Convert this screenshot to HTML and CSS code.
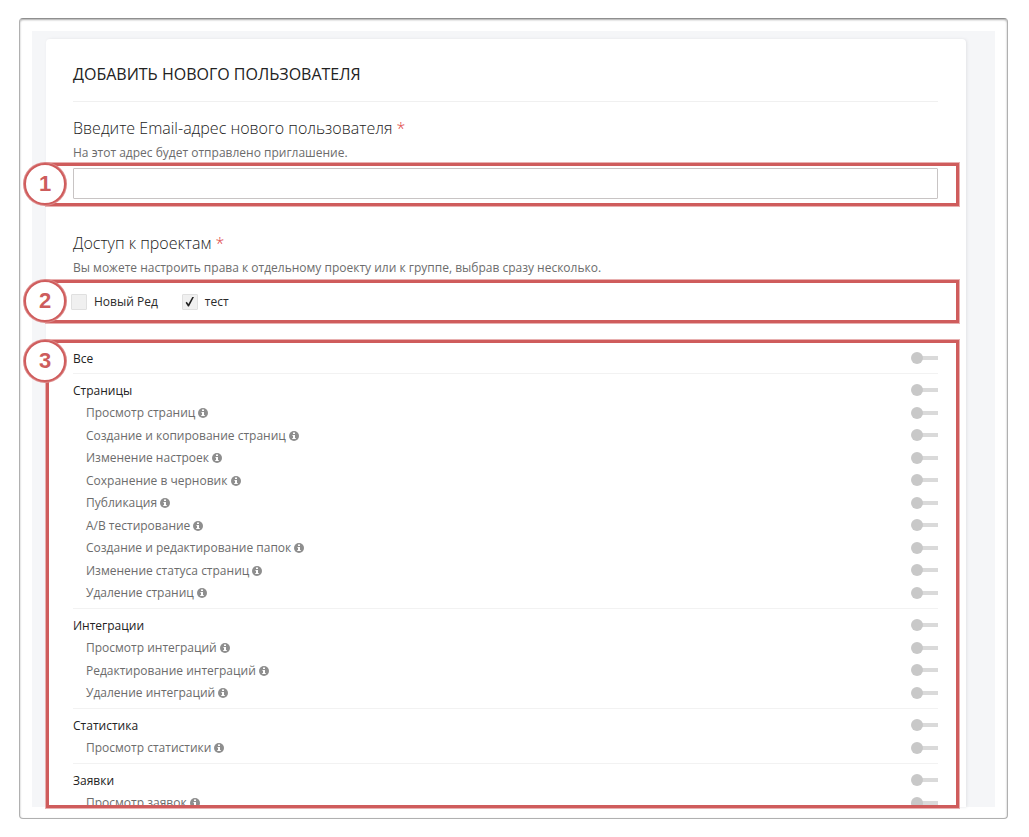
FILE: index.html
```html
<!DOCTYPE html>
<html lang="ru">
<head>
<meta charset="utf-8">
<meta name="viewport" content="width=device-width, initial-scale=1">
<title>Добавить нового пользователя</title>
<link rel="stylesheet" href="styles.css">
</head>
<body>
<svg class="sprite" aria-hidden="true">
  <symbol id="info" viewBox="0 0 20 20">
    <circle cx="10" cy="10" r="10" fill="#8e8e8e"/>
    <path fill="#fff" d="M8 3h4v3H8zM7 8h5v6h1.500v2h-7v-2H8v-4H7z"/>
  </symbol>
</svg>
<main class="frame">
  <div class="pane">
    <form class="card">
      <h1 class="title">Добавить нового пользователя</h1>

      <div class="field">
        <label class="label" for="email">Введите Email-адрес нового пользователя <span class="required">*</span></label>
        <p class="hint" id="email-hint">На этот адрес будет отправлено приглашение.</p>
      </div>
      <div class="callout">
        <span class="badge">1</span>
        <input class="text-input" id="email" type="email" aria-describedby="email-hint">
      </div>

      <div class="field field-next">
        <h2 class="label">Доступ к проектам <span class="required">*</span></h2>
        <p class="hint">Вы можете настроить права к отдельному проекту или к группе, выбрав сразу несколько.</p>
      </div>
      <div class="callout projects">
        <span class="badge">2</span>
        <label class="check"><input class="check-box" type="checkbox">Новый Ред</label>
        <label class="check"><input class="check-box" type="checkbox" checked>тест</label>
      </div>

      <div class="callout rights">
        <span class="badge">3</span>
        <div class="rights-list">
          <section class="group">
            <label class="row row-head">Все<input class="switch" type="checkbox"></label>
          </section>
          <section class="group">
            <label class="row row-head">Страницы<input class="switch" type="checkbox"></label>
            <label class="row"><span>Просмотр страниц <svg class="info"><use href="#info"/></svg></span><input class="switch" type="checkbox"></label>
            <label class="row"><span>Создание и копирование страниц <svg class="info"><use href="#info"/></svg></span><input class="switch" type="checkbox"></label>
            <label class="row"><span>Изменение настроек <svg class="info"><use href="#info"/></svg></span><input class="switch" type="checkbox"></label>
            <label class="row"><span>Сохранение в черновик <svg class="info"><use href="#info"/></svg></span><input class="switch" type="checkbox"></label>
            <label class="row"><span>Публикация <svg class="info"><use href="#info"/></svg></span><input class="switch" type="checkbox"></label>
            <label class="row"><span>A/B тестирование <svg class="info"><use href="#info"/></svg></span><input class="switch" type="checkbox"></label>
            <label class="row"><span>Создание и редактирование папок <svg class="info"><use href="#info"/></svg></span><input class="switch" type="checkbox"></label>
            <label class="row"><span>Изменение статуса страниц <svg class="info"><use href="#info"/></svg></span><input class="switch" type="checkbox"></label>
            <label class="row"><span>Удаление страниц <svg class="info"><use href="#info"/></svg></span><input class="switch" type="checkbox"></label>
          </section>
          <section class="group">
            <label class="row row-head">Интеграции<input class="switch" type="checkbox"></label>
            <label class="row"><span>Просмотр интеграций <svg class="info"><use href="#info"/></svg></span><input class="switch" type="checkbox"></label>
            <label class="row"><span>Редактирование интеграций <svg class="info"><use href="#info"/></svg></span><input class="switch" type="checkbox"></label>
            <label class="row"><span>Удаление интеграций <svg class="info"><use href="#info"/></svg></span><input class="switch" type="checkbox"></label>
          </section>
          <section class="group">
            <label class="row row-head">Статистика<input class="switch" type="checkbox"></label>
            <label class="row"><span>Просмотр статистики <svg class="info"><use href="#info"/></svg></span><input class="switch" type="checkbox"></label>
          </section>
          <section class="group">
            <label class="row row-head">Заявки<input class="switch" type="checkbox"></label>
            <label class="row"><span>Просмотр заявок <svg class="info"><use href="#info"/></svg></span><input class="switch" type="checkbox"></label>
          </section>
        </div>
      </div>
    </form>
  </div>
</main>
</body>
</html>
```
FILE: styles.css
```css
* { box-sizing: border-box; }

body {
  margin: 0;
  height: 100vh;
  padding: 18px 21px 18px 19px;
  display: flex;
  background: #fff;
  color: #2b2b2b;
  font-family: "Open Sans", "Noto Sans", sans-serif;
  font-size: 12px;
}

.sprite { display: none; }

.frame {
  flex: 1;
  min-width: 0;
  display: flex;
  padding: 12px 12px 11px;
  border: 1px solid #b0b0b0;
  border-top-color: #8f8f8f;
  border-radius: 4px;
  box-shadow: inset 0 1px 2px #ababab;
}

.pane {
  flex: 1;
  min-width: 0;
  display: flex;
  padding: 8px 29px 0 14px;
  background: #f5f6f8;
}

.card {
  flex: 1;
  min-width: 0;
  display: flex;
  flex-direction: column;
  background: #fff;
  border-radius: 4px 4px 0 0;
  box-shadow: 1px 0 3px #e2e3e6;
}

.title {
  margin: 0 28px 0 27px;
  padding: 23px 0 15px;
  border-bottom: 1px solid #f0f0f0;
  font-size: 16px;
  font-weight: 400;
  line-height: 24px;
  text-transform: uppercase;
  color: #222;
}

.field { margin: 15px 28px 1px 27px; }
.field-next {
  margin-top: 26px;
  margin-bottom: 3px;
}

.label {
  display: block;
  margin: 0 0 5px;
  font-size: 16px;
  font-weight: 300;
  line-height: 22px;
  color: #222;
}

.required { color: #e04848; }

.hint {
  margin: 0;
  line-height: 18px;
  color: #6c6c6c;
}

.callout {
  position: relative;
  margin-right: 7px;
  padding: 2px 18px 4px 24px;
  border: 3px solid #cf5c5c;
  box-shadow: 0 0 0 1px #e8b0b0;
}

.badge {
  position: absolute;
  top: -3px;
  left: -25px;
  width: 42px;
  height: 42px;
  border: 2px solid #cf5c5c;
  border-radius: 50%;
  box-shadow: 0 0 0 1px #dc8a8a;
  background: #fff;
  color: #cd5c5c;
  font: bold 22px/38px "Liberation Sans", Arial, sans-serif;
  text-align: center;
}

.text-input {
  display: block;
  width: 100%;
  height: 31px;
  padding: 0 8px;
  border: 1px solid #c8c4c4;
  border-radius: 1px;
  background: #fff;
  font: inherit;
}

.projects {
  display: flex;
  gap: 24px;
  height: 43px;
  margin-bottom: 17px;
  padding: 0 18px 0 22px;
}

.check {
  display: flex;
  align-items: center;
  gap: 7px;
}

.check-box {
  appearance: none;
  width: 16px;
  height: 16px;
  margin: 0;
  border: 1px solid #e0e0e0;
  border-radius: 1px;
  background: #f0f0f0;
}

.check-box:checked::before {
  content: "";
  display: block;
  width: 10px;
  height: 10px;
  margin: 2px;
  background: #222;
  clip-path: polygon(8% 62%, 20% 52%, 36% 74%, 78% 0, 92% 6%, 42% 100%, 32% 100%);
}

.rights {
  flex: 1;
  min-height: 0;
  display: flex;
  margin-bottom: -1px;
  padding: 0 18px 0 24px;
}

.rights-list {
  flex: 1;
  min-width: 0;
  overflow: hidden;
}

.group {
  padding: 5px 0 4px;
  border-bottom: 1px solid #f2f2f2;
}
.group:first-child { padding-top: 4px; }

.row {
  display: flex;
  align-items: center;
  justify-content: space-between;
  height: 22px;
  padding-left: 13px;
  color: #6c6c6c;
}
.row:nth-child(even) { height: 23px; }

.row-head {
  padding-left: 0;
  color: #222;
}

.info {
  width: 10px;
  height: 10px;
  vertical-align: -1px;
}

.switch {
  appearance: none;
  flex: none;
  width: 27px;
  height: 12px;
  margin: 0;
  background: linear-gradient(#dadada, #dadada) right center / 16px 4px no-repeat;
}

.switch::before {
  content: "";
  display: block;
  width: 12px;
  height: 12px;
  border-radius: 50%;
  background: #c8c8c8;
}
```
